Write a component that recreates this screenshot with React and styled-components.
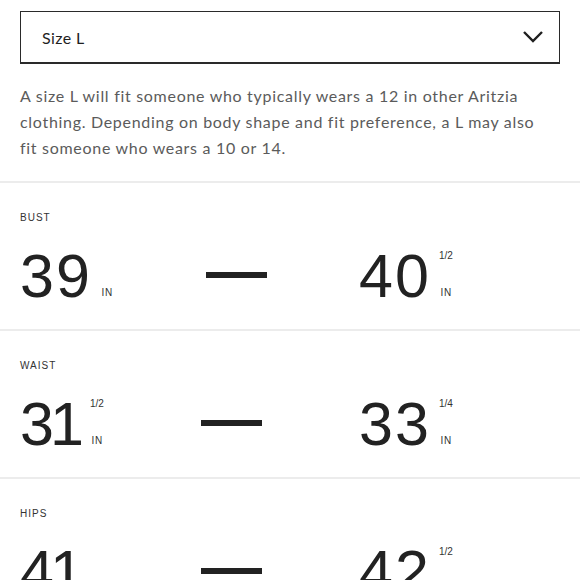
import styled, { createGlobalStyle } from 'styled-components'

const GlobalStyle = createGlobalStyle`
    html, body {
        margin: 0;
        padding: 0;
        background: #ffffff;
        overflow: hidden;
    }
    * {
        box-sizing: border-box;
    }
`

const Page = styled.div`
    width: 580px;
    height: 580px;
    overflow: hidden;
    background: #ffffff;
    font-family: Lato, "Liberation Sans", sans-serif;
`

const Select = styled.div`
    margin: 11px 20px 0;
    height: 53px;
    border: 1.5px solid #2a2a2a;
    border-bottom-width: 2px;
    display: flex;
    align-items: center;
    justify-content: space-between;
    padding: 0 15px 0 21px;
    font-size: 16px;
    letter-spacing: 0.4px;
    color: #1f1f1f;
`

const Chevron = styled.svg`
    width: 22px;
    height: 14px;
    display: block;
`

const Blurb = styled.p`
    margin: 19px 30px 20px 20px;
    font-size: 16px;
    line-height: 26px;
    letter-spacing: 0.7px;
    color: #5b5b5b;
`

const Section = styled.section`
    border-top: 2px solid #ececec;
    padding: 29px 20px 23px;
`

const Label = styled.div`
    font-family: "Liberation Sans", Arial, sans-serif;
    font-size: 10px;
    line-height: 12px;
    letter-spacing: 1px;
    color: #333333;
    margin-bottom: 22px;
`

const Range = styled.div`
    display: flex;
    align-items: stretch;
    height: 60px;
`

const Measure = styled.div`
    display: flex;
    align-items: stretch;
    flex: ${p => (p.$end ? '0 0 201px' : '0 0 auto')};
`

const Value = styled.span`
    font-family: "Liberation Sans", Arial, sans-serif;
    font-size: 61px;
    line-height: 60px;
    color: #222222;
    letter-spacing: ${p => (p.$tight ? '-4px' : '2px')};
    margin-right: ${p => (p.$tight ? '0' : '-2px')};
`

const Suffix = styled.div`
    width: 16px;
    margin-left: 9px;
    display: flex;
    flex-direction: column;
    align-items: center;
    justify-content: space-between;
    padding: 5px 0 8px;
    font-family: "Liberation Sans", Arial, sans-serif;
    font-size: 10px;
    line-height: 10px;
    color: #333333;
`

const Unit = styled.span`
    letter-spacing: 0.8px;
    margin-right: -0.8px;
`

const Between = styled.div`
    flex: 1;
    display: flex;
    align-items: center;
    justify-content: center;
    padding-bottom: 3px;
`

const Dash = styled.div`
    width: 61px;
    height: 6px;
    background: #222222;
`

const rows = [
    { label: 'BUST', from: ['39', ''], to: ['40', '1/2'] },
    { label: 'WAIST', from: ['31', '1/2'], to: ['33', '1/4'] },
    { label: 'HIPS', from: ['41', ''], to: ['42', '1/2'] },
]

function Amount({ value, fraction, end }) {
    return (
        <Measure $end={end}>
            <Value $tight={value.endsWith('1')}>{value}</Value>
            <Suffix>
                <span>{fraction}</span>
                <Unit>IN</Unit>
            </Suffix>
        </Measure>
    )
}

export default function App() {
    return (
        <>
            <GlobalStyle />
            <Page>
                <Select>
                    <span>Size L</span>
                    <Chevron viewBox="0 0 22 14">
                        <polyline points="2,2 11,11 20,2" fill="none" stroke="#1f1f1f" strokeWidth="2.4" />
                    </Chevron>
                </Select>
                <Blurb>
                    A size L will fit someone who typically wears a 12 in other Aritzia
                    clothing. Depending on body shape and fit preference, a L may also
                    fit someone who wears a 10 or 14.
                </Blurb>
                {rows.map(r => (
                    <Section key={r.label}>
                        <Label>{r.label}</Label>
                        <Range>
                            <Amount value={r.from[0]} fraction={r.from[1]} />
                            <Between><Dash /></Between>
                            <Amount value={r.to[0]} fraction={r.to[1]} end />
                        </Range>
                    </Section>
                ))}
            </Page>
        </>
    )
}
